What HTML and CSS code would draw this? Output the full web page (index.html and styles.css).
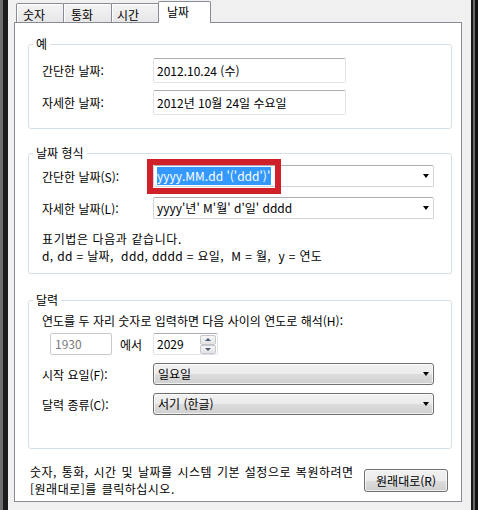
FILE: index.html
```html
<!DOCTYPE html>
<html lang="ko">
<head>
<meta charset="utf-8">
<title>국가 및 언어 - 날짜</title>
<link rel="stylesheet" href="styles.css">
</head>
<body>
<div class="win">
  <div class="frame-l"></div>
  <div class="main">
    <div class="tabs">
      <div class="tab t1">숫자</div>
      <div class="tab t2">통화</div>
      <div class="tab t3">시간</div>
      <div class="tab active">날짜</div>
    </div>
    <div class="panel">
      <fieldset class="group g1">
        <legend>예</legend>
        <div class="gbody">
          <div class="row"><span class="label">간단한 날짜:</span><div class="textbox">2012.10.24 (수)</div></div>
          <div class="row r2"><span class="label">자세한 날짜:</span><div class="textbox">2012년 10월 24일 수요일</div></div>
        </div>
      </fieldset>

      <fieldset class="group g2">
        <legend>날짜 형식</legend>
        <div class="gbody">
          <div class="row"><span class="label">간단한 날짜(S):</span>
            <div class="combo edit"><span class="sel">yyyy.MM.dd '('ddd')'</span><span class="arrow"></span><div class="mark"></div></div>
          </div>
          <div class="row r2b"><span class="label">자세한 날짜(L):</span>
            <div class="combo edit"><span class="val">yyyy'년' M'월' d'일' dddd</span><span class="arrow"></span></div>
          </div>
          <div class="note">
            <div class="n1">표기법은 다음과 같습니다.</div>
            <div class="pre">d, dd = 날짜,  ddd, dddd = 요일,  M = 월,  y = 연도</div>
          </div>
        </div>
      </fieldset>

      <fieldset class="group g3">
        <legend>달력</legend>
        <div class="gbody">
          <div class="line">연도를 두 자리 숫자로 입력하면 다음 사이의 연도로 해석(H):</div>
          <div class="yrow">
            <div class="numbox dis">1930</div>
            <span class="from">에서</span>
            <div class="numbox spin">2029
              <div class="spinner"><div class="sb up"><span></span></div><div class="sb down"><span></span></div></div>
            </div>
          </div>
          <div class="row r3"><span class="label">시작 요일(F):</span>
            <div class="combo list"><span class="val">일요일</span><span class="arrow"></span></div>
          </div>
          <div class="row r3"><span class="label">달력 종류(C):</span>
            <div class="combo list"><span class="val">서기 (한글)</span><span class="arrow"></span></div>
          </div>
        </div>
      </fieldset>

      <div class="bottom">
        <div class="btext">숫자, 통화, 시간 및 날짜를 시스템 기본 설정으로 복원하려면<br>[원래대로]를 클릭하십시오.</div>
        <div class="button">원래대로(R)</div>
      </div>
    </div>
  </div>
  <div class="frame-r"></div>
</div>
</body>
</html>
```

FILE: styles.css
```css
* { box-sizing: border-box; }
html, body { margin: 0; padding: 0; }
body {
  width: 478px;
  height: 510px;
  overflow: hidden;
  background: #f0f0f0;
  font-family: "Noto Sans CJK KR", "Malgun Gothic", sans-serif;
  font-size: 12px;
  color: #000;
}
.win { display: flex; height: 510px; }
.frame-l { width: 8px; background: linear-gradient(to right, #6e6e6e 0 3px, #1c1c1c 3px 8px); }
.frame-r { width: 7px; background: linear-gradient(to right, #1c1c1c 0 2px, #6a6a6a 2px 4px, #141414 4px 7px); }
.main {
  flex: 1;
  display: flex;
  flex-direction: column;
  padding: 0 9px 8px 6px;
}

/* tabs */
.tabs {
  height: 22px;
  display: flex;
  align-items: flex-end;
  padding-left: 2px;
  position: relative;
  z-index: 2;
}
.tab {
  height: 19px;
  border: 1px solid #898c95;
  border-bottom: none;
  border-radius: 2px 2px 0 0;
  background: linear-gradient(#f4f4f4, #e6e6e6);
  box-shadow: inset 1px 1px 0 #fff;
  padding: 4px 0 0 6px;
  line-height: 14px;
  white-space: nowrap;
}
.t1 { width: 48px; }
.t2 { width: 49px; margin-left: -1px; padding-left: 7px; }
.t3 { width: 48px; margin-left: -1px; padding-left: 5px; }
.tab.active {
  width: 53px;
  height: 22px;
  margin-left: -1px;
  margin-bottom: -1px;
  background: #fff;
  box-shadow: none;
  padding: 3px 0 0 8px;
}

/* panel */
.panel {
  flex: 1;
  background: #fff;
  border: 1px solid #898c95;
  padding: 14px 9px 0 13px;
  display: flex;
  flex-direction: column;
}
.group {
  margin: 0;
  padding: 0;
  min-width: 0;
  border: 1px solid #d5dfe5;
  border-radius: 3px;
}
.group legend {
  padding: 0 3px;
  margin-left: 4px;
  line-height: 14px;
  font-size: 12px;
}
.gbody { padding-left: 13px; }
.g1 .gbody { padding-top: 7px; padding-bottom: 13px; }
.g2 { margin-top: 17px; }
.g2 .gbody { padding-top: 5px; padding-bottom: 9px; }
.g3 { margin-top: 19px; }
.g3 .gbody { padding-top: 5px; padding-bottom: 33px; }

.row { display: flex; align-items: center; }
.label { width: 111px; flex: none; white-space: nowrap; }
.r2 { margin-top: 7px; }
.r2b { margin-top: 10px; }
.r3 { margin-top: 8px; }

.textbox {
  width: 193px;
  height: 25px;
  border: 1px solid #e2e3ea;
  border-top-color: #abadb3;
  border-radius: 2px;
  padding-left: 3px;
  line-height: 23px;
  white-space: nowrap;
}

.combo {
  position: relative;
  width: 281px;
  height: 22px;
  border-radius: 2px;
  white-space: nowrap;
}
.combo.edit {
  border: 1px solid #d0d3da;
  border-top-color: #abadb3;
  background: #fff;
}
.combo .sel {
  display: inline-block;
  margin: 1px 0 0 3px;
  background: #3399ff;
  color: #fff;
  line-height: 18px;
  padding: 0 1px 0 0;
}
.combo .val {
  display: inline-block;
  padding-left: 3px;
  line-height: 20px;
}
.combo.list .val { padding-left: 4px; }
.combo.list {
  border: 1px solid #707070;
  border-radius: 3px;
  background: linear-gradient(#f2f2f2 0%, #ebebeb 50%, #dddddd 50%, #cfcfcf 100%);
  box-shadow: inset 0 0 0 1px rgba(255,255,255,0.7);
}
.arrow {
  position: absolute;
  right: 4px;
  top: 8px;
  width: 0;
  height: 0;
  border-left: 3.5px solid transparent;
  border-right: 3.5px solid transparent;
  border-top: 4px solid #000;
}
.mark {
  position: absolute;
  left: -7px;
  top: -7px;
  width: 134px;
  height: 35px;
  border: 6px solid #d0212b;
}

.note { margin-top: 11px; line-height: 17px; }
.n1 { letter-spacing: 0.6px; }
.pre { white-space: pre; letter-spacing: 0.35px; }

.line { line-height: 17px; white-space: nowrap; }
.yrow { display: flex; align-items: center; margin-top: 4px; }
.numbox {
  height: 22px;
  border: 1px solid #e2e3ea;
  border-top-color: #abadb3;
  border-radius: 2px;
  line-height: 20px;
  padding-left: 3px;
}
.numbox.dis {
  width: 62px;
  margin-left: 8px;
  color: #7a7a7a;
  border-color: #c9c9c9;
  padding-left: 4px;
}
.from { width: 41px; padding-left: 8px; }
.numbox.spin {
  position: relative;
  width: 65px;
  display: flex;
}
.spinner {
  position: absolute;
  right: 1px;
  top: 1px;
  width: 16px;
  height: 19px;
  display: flex;
  flex-direction: column;
}
.sb {
  flex: 1;
  border: 1px solid #c3c8ce;
  border-radius: 2px;
  background: linear-gradient(#f7f7f7, #e3e3e3);
  display: flex;
  align-items: center;
  justify-content: center;
}
.sb span { width: 0; height: 0; border-left: 3px solid transparent; border-right: 3px solid transparent; }
.sb.up span { border-bottom: 3px solid #4b5a78; }
.sb.down span { border-top: 3px solid #4b5a78; }

.bottom {
  margin-top: 14px;
  display: flex;
  align-items: center;
  justify-content: space-between;
  padding: 0 4px 0 2px;
}
.btext { line-height: 17px; word-spacing: 1px; letter-spacing: 0.5px; white-space: nowrap; }
.button {
  width: 84px;
  height: 23px;
  flex: none;
  border: 1px solid #707070;
  border-radius: 3px;
  background: linear-gradient(#f2f2f2 0%, #ebebeb 50%, #dddddd 50%, #cfcfcf 100%);
  box-shadow: inset 0 0 0 1px rgba(255,255,255,0.7);
  text-align: center;
  line-height: 21px;
}
```
